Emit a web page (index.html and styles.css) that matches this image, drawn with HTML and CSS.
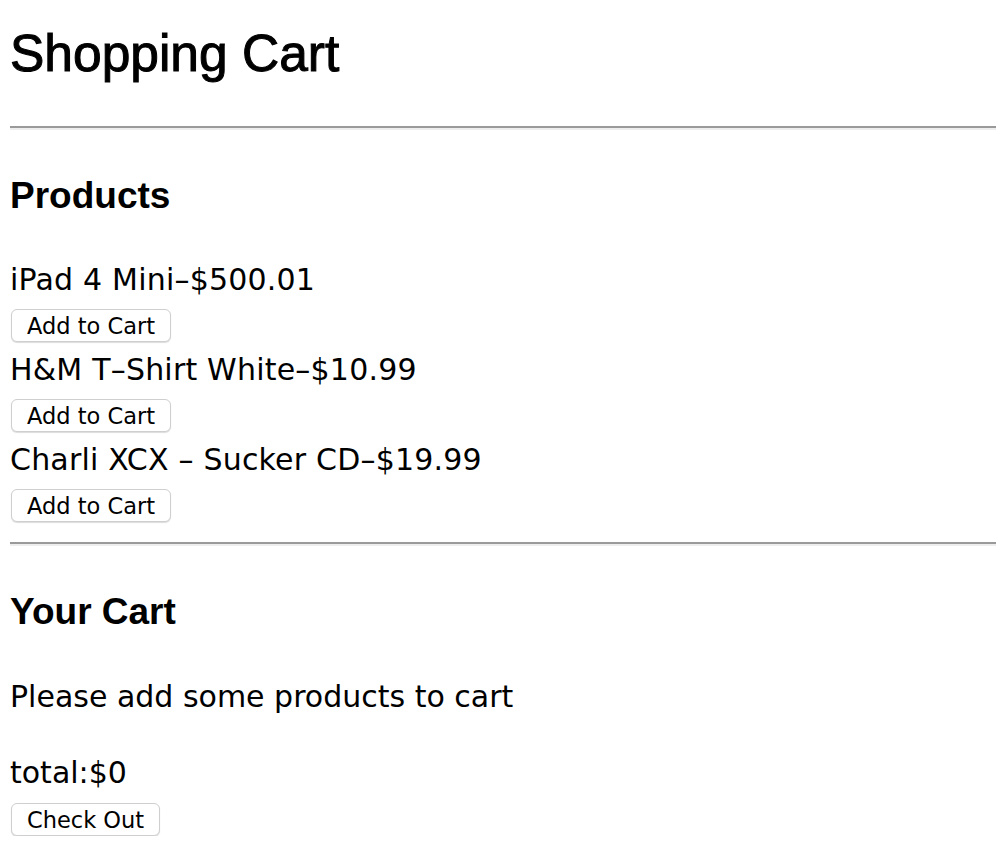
FILE: index.html
```html
<!DOCTYPE html>
<html lang="en">
<head>
<meta charset="utf-8">
<title>Shopping Cart</title>
<link rel="stylesheet" href="styles.css">
</head>
<body>
  <h1 class="page-title">Shopping Cart</h1>
  <hr class="divider">
  <section class="products">
    <h3 class="section-title">Products</h3>
    <div class="product-list">
      <div class="product">
        <div class="product-name">iPad 4 Mini–$500.01</div>
        <button class="btn">Add to Cart</button>
      </div>
      <div class="product">
        <div class="product-name">H&amp;M T–Shirt White–$10.99</div>
        <button class="btn">Add to Cart</button>
      </div>
      <div class="product">
        <div class="product-name">Charli XCX – Sucker CD–$19.99</div>
        <button class="btn">Add to Cart</button>
      </div>
    </div>
  </section>
  <hr class="divider divider-second">
  <section class="cart">
    <h3 class="section-title">Your Cart</h3>
    <p class="cart-empty">Please add some products to cart</p>
    <p class="cart-total">total:$0</p>
    <button class="btn">Check Out</button>
  </section>
</body>
</html>
```

FILE: styles.css
```css
html, body {
  background: #ffffff;
}

body {
  margin: 0 0 0 10px;
  color: #000000;
  font-family: "DejaVu Sans", "Liberation Sans", sans-serif;
  font-size: 30px;
  line-height: 40px;
}

.page-title {
  margin: 24px 0 0;
  font-family: "Liberation Sans", Arial, sans-serif;
  font-weight: 400;
  font-size: 51.5px;
  line-height: 58px;
  -webkit-text-stroke: 1px #000;
}

.divider {
  height: 0;
  margin: 44px 0 0;
  border: 0;
  border-top: 2px solid #9a9a9a;
  border-bottom: 2px solid #eeeeee;
}

.divider-second {
  margin-top: 20px;
}

.section-title {
  margin: 45px 0 0;
  font-family: "Liberation Sans", Arial, sans-serif;
  font-weight: 700;
  font-size: 37px;
  line-height: 41px;
}

.product-list {
  display: flex;
  flex-direction: column;
  gap: 8px;
  margin-top: 44px;
}

.product {
  display: flex;
  flex-direction: column;
  align-items: flex-start;
  gap: 9px;
}

.product-name {
  line-height: 40px;
  letter-spacing: 0.2px;
}

.btn {
  display: block;
  box-sizing: border-box;
  height: 33px;
  margin: 0 0 0 1px;
  padding: 0 15px;
  background: #ffffff;
  color: #000000;
  border: 1px solid #cfcfcf;
  border-radius: 6px;
  box-shadow: 0 1px 1px rgba(0, 0, 0, 0.14);
  font-family: "DejaVu Sans", sans-serif;
  font-size: 22.5px;
  line-height: 30px;
}

.cart-empty {
  margin: 45px 0 0;
}

.cart-total {
  margin: 36px 0 10px;
}
```
